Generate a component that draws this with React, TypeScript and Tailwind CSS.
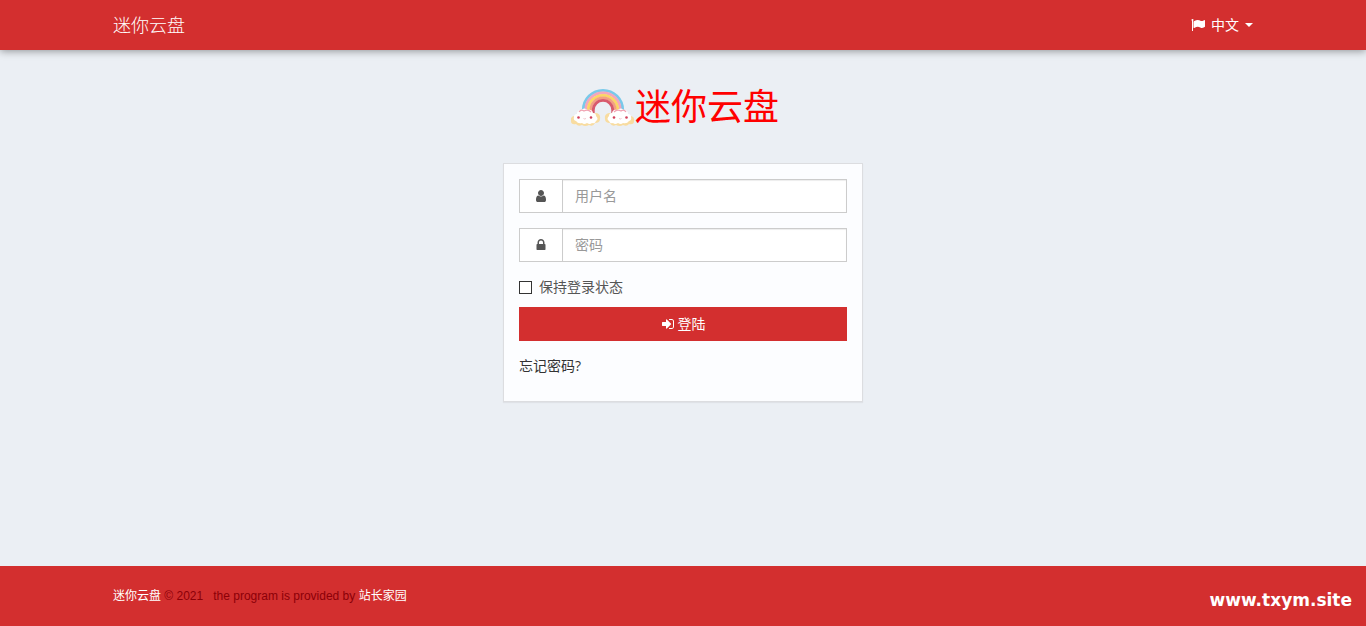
import React, { useState } from 'react';

interface IconProps {
  path: string;
  className?: string;
}

const icons = {
  flag: 'M320 256q0 72-64 110v1266q0 13-9.5 22.5t-22.5 9.5h-64q-13 0-22.5-9.5t-9.5-22.5v-1266q-64-38-64-110 0-53 37.5-90.5t90.5-37.5 90.5 37.5 37.5 90.5zm1472 64v763q0 25-12.5 38.5t-39.5 27.5q-215 116-369 116-61 0-123.5-22t-108.5-48-115.5-48-142.5-22q-192 0-464 146-17 9-33 9-26 0-45-19t-19-45v-742q0-32 31-55 21-14 79-43 236-120 421-120 107 0 200 29t219 88q38 19 88 19 54 0 117.5-21t110-47 88-47 54.5-21q26 0 45 19t19 45z',
  user: 'M1536 1399q0 109-62.5 187t-150.5 78h-854q-88 0-150.5-78t-62.5-187q0-85 8.5-160.5t31.5-152 58.5-131 94-89 134.5-34.5q131 128 313 128t313-128q76 0 134.5 34.5t94 89 58.5 131 31.5 152 8.5 160.5zm-256-887q0 159-112.5 271.5t-271.5 112.5-271.5-112.5-112.5-271.5 112.5-271.5 271.5-112.5 271.5 112.5 112.5 271.5z',
  lock: 'M640 768h512v-192q0-106-75-181t-181-75-181 75-75 181v192zm832 96v576q0 40-28 68t-68 28h-960q-40 0-68-28t-28-68v-576q0-40 28-68t68-28h32v-192q0-184 132-316t316-132 316 132 132 316v192h32q40 0 68 28t28 68z',
  signIn: 'M1312 896q0 26-19 45l-544 544q-19 19-45 19t-45-19-19-45v-288h-448q-26 0-45-19t-19-45v-384q0-26 19-45t45-19h448v-288q0-26 19-45t45-19 45 19l544 544q19 19 19 45zm352-352v704q0 119-84.5 203.5t-203.5 84.5h-320q-13 0-22.5-9.5t-9.5-22.5q0-4-1-20t-.5-26.5 3-23.5 10-19.5 20.5-6.5h320q66 0 113-47t47-113v-704q0-66-47-113t-113-47h-312l-11.5-1-11.5-3-8-5.5-7-9-2-13.5q0-4-1-20t-.5-26.5 3-23.5 10-19.5 20.5-6.5h320q119 0 203.5 84.5t84.5 203.5z',
};

const Icon: React.FC<IconProps> = ({ path, className }) => (
  <svg viewBox="0 0 1792 1792" fill="currentColor" aria-hidden="true" className={`w-3.5 h-3.5 shrink-0 ${className ?? ''}`}>
    <path d={path} />
  </svg>
);

const Cloud: React.FC = () => (
  <>
    <path d="M0 34q-1-4 3-5l22-3q5 1 4 6 0 4-5 4-2 4-6 2-4 2-7 0-4 2-6-1-5 1-5-3z" fill="#f8dca0" />
    <path d="M5 34q-3-1-2-4 0-3 3-3 0-4 4-4 3-3 7 0 4-1 5 3 3 0 3 3 3 3 0 5-1 3-4 2-2 2-5 0-3 2-5 0-4 1-6-2z" fill="#fff" />
    <path d="M8 25q2-3 5-1 4-2 7 1" stroke="#f0a3b2" strokeWidth="1.2" fill="none" />
    <circle cx="7.5" cy="30.5" r="1.3" fill="#d0405a" />
    <circle cx="20" cy="30.5" r="1.3" fill="#d0405a" />
    <path d="M12.5 31.5q1.2 1 2.4 0" stroke="#efb0ba" strokeWidth=".8" fill="none" />
  </>
);

const Rainbow: React.FC = () => (
  <svg viewBox="0 0 64 40" fill="none" aria-hidden="true" className="w-16 h-10">
    <g strokeWidth="2.8">
      <path d="M12.3 27V23a19.7 19.7 0 0 1 39.4 0V27" stroke="#79c9ea" />
      <path d="M14.8 27V23a17.2 17.2 0 0 1 34.4 0V27" stroke="#f2a6bd" />
      <path d="M17.3 27V23a14.7 14.7 0 0 1 29.4 0V27" stroke="#fbd665" />
      <path d="M19.8 27V23a12.2 12.2 0 0 1 24.4 0V27" stroke="#f3a083" />
      <path d="M22.3 27V23a9.7 9.7 0 0 1 19.4 0V27" stroke="#d85a6c" />
    </g>
    <Cloud />
    <g transform="translate(63 0) scale(-1 1)">
      <Cloud />
    </g>
  </svg>
);

interface FieldProps {
  id: string;
  type: string;
  label: string;
  icon: string;
  value: string;
  onChange: (value: string) => void;
}

const Field: React.FC<FieldProps> = ({ id, type, label, icon, value, onChange }) => (
  <div className="flex h-[34px] mb-[15px] bg-white border border-[#ccc]">
    <label htmlFor={id} aria-label={label} className="flex items-center justify-center w-[43px] border-r border-[#ccc]">
      <Icon path={icon} />
    </label>
    <input
      id={id}
      type={type}
      placeholder={label}
      value={value}
      onChange={e => onChange(e.target.value)}
      className="flex-1 min-w-0 px-3 text-[#555] placeholder:text-[#999] shadow-[inset_0_1px_1px_rgba(0,0,0,0.075)] outline-none"
    />
  </div>
);

const App: React.FC = () => {
  const [username, setUsername] = useState('');
  const [password, setPassword] = useState('');
  const [remember, setRemember] = useState(false);

  return (
    <div className="flex flex-col min-h-screen bg-[#ebeff4] text-sm leading-5 text-[#555] font-['Open_Sans','Noto_Sans_CJK_SC',sans-serif]">
      <header className="bg-[#d32f2f] text-white shadow-[0_1px_8px_rgba(0,0,0,0.4)]">
        <nav className="flex items-center justify-between h-[50px] max-w-[1170px] mx-auto px-[15px]">
          <a href="#" className="text-lg leading-5 font-light">迷你云盘</a>
          <button type="button" className="flex items-center cursor-pointer">
            <Icon path={icons.flag} className="mr-1.5" />
            中文
            <span className="ml-1.5 border-x-4 border-t-4 border-x-transparent border-t-white" />
          </button>
        </nav>
      </header>

      <main className="flex-1 px-4 pt-[37px] pb-8">
        <h1 className="flex items-center justify-center h-10 mb-9 pr-4 text-4xl text-[#ff0000]">
          <Rainbow />
          迷你云盘
        </h1>

        <form
          onSubmit={e => e.preventDefault()}
          className="max-w-[360px] mx-auto px-[15px] pt-[15px] pb-[25px] bg-[#fcfdff] border border-[#dcdde0] shadow-[0_1px_1px_rgba(0,0,0,0.05)]"
        >
          <Field id="username" type="text" label="用户名" icon={icons.user} value={username} onChange={setUsername} />
          <Field id="password" type="password" label="密码" icon={icons.lock} value={password} onChange={setPassword} />
          <label className="flex items-center gap-[7px] mb-2.5">
            <input
              type="checkbox"
              checked={remember}
              onChange={e => setRemember(e.target.checked)}
              className="appearance-none w-[13px] h-[13px] bg-white border border-[#333] checked:bg-[#333]"
            />
            保持登录状态
          </label>
          <button type="submit" className="flex items-center justify-center gap-[3px] w-full h-[34px] mb-[15px] bg-[#d32f2f] text-white cursor-pointer">
            <Icon path={icons.signIn} />
            登陆
          </button>
          <a href="#" className="block w-fit text-[#333]">忘记密码?</a>
        </form>
      </main>

      <footer className="relative bg-[#d32f2f]">
        <div className="flex items-center h-[60px] max-w-[1170px] mx-auto px-[15px] text-xs text-[#8b0008] font-['Liberation_Sans','Noto_Sans_CJK_SC',sans-serif]">
          <p className="whitespace-pre-wrap">
            <a href="#" className="text-white">迷你云盘</a>
            {' © 2021   the program is provided by '}
            <a href="#" className="text-white">站长家园</a>
          </p>
        </div>
        <span className="absolute right-3.5 bottom-4 text-[17px] leading-5 font-bold text-white font-['DejaVu_Sans',sans-serif]">
          www.txym.site
        </span>
      </footer>
    </div>
  );
};

export default App;
